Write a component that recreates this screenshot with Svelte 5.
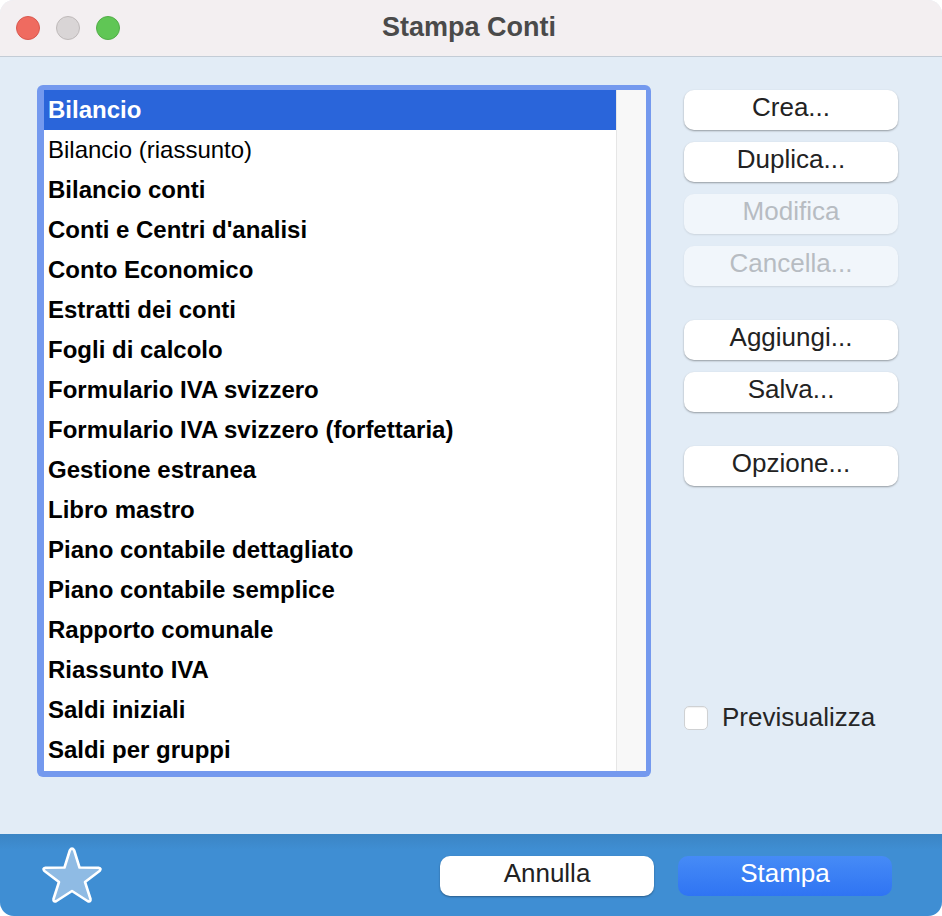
<script>
  const rows = [
    ['Bilancio', true, true],
    ['Bilancio (riassunto)', false],
    ['Bilancio conti', true],
    ["Conti e Centri d'analisi", true],
    ['Conto Economico', true],
    ['Estratti dei conti', true],
    ['Fogli di calcolo', true],
    ['Formulario IVA svizzero', true],
    ['Formulario IVA svizzero (forfettaria)', true],
    ['Gestione estranea', true],
    ['Libro mastro', true],
    ['Piano contabile dettagliato', true],
    ['Piano contabile semplice', true],
    ['Rapporto comunale', true],
    ['Riassunto IVA', true],
    ['Saldi iniziali', true],
    ['Saldi per gruppi', true]
  ];
  const groups = [
    [['Crea...', false], ['Duplica...', false], ['Modifica', true], ['Cancella...', true]],
    [['Aggiungi...', false], ['Salva...', false]],
    [['Opzione...', false]]
  ];
</script>

<div class="window">
  <header class="titlebar">
    <div class="lights">
      <span class="light red"></span>
      <span class="light gray"></span>
      <span class="light green"></span>
    </div>
    <h1>Stampa Conti</h1>
  </header>

  <main class="content">
    <div class="list">
      <div class="rows">
        {#each rows as [label, bold, selected]}
          <div class="row" class:bold class:selected>{label}</div>
        {/each}
      </div>
      <div class="track"></div>
    </div>

    <aside class="side">
      <div class="groups">
        {#each groups as group}
          <div class="group">
            {#each group as [label, disabled]}
              <button class="btn" {disabled}>{label}</button>
            {/each}
          </div>
        {/each}
      </div>
      <label class="check">
        <span class="box"></span>
        <span>Previsualizza</span>
      </label>
    </aside>
  </main>

  <footer class="footer">
    <svg class="star" width="62" height="62" viewBox="0 0 62 62">
      <path d="M28.8 4.5 Q31 0.8 33.2 4.5 L38.5 21.5 L57.5 21.8 Q61 22.5 58.5 25 L44 36 L49.5 53 Q50 56.5 46.5 55 L31 45 L15.5 55 Q12 56.5 12.5 53 L18 36 L3.5 25 Q1 22.5 4.5 21.8 L23.5 21.5 Z" fill="#8fbbe4" stroke="#fff" stroke-width="2.6" stroke-linejoin="round"/>
    </svg>
    <div class="actions">
      <button class="btn">Annulla</button>
      <button class="btn primary">Stampa</button>
    </div>
  </footer>
</div>

<style>
  :global(body) {
    margin: 0;
    background: #fff;
  }
  .window {
    width: 942px;
    height: 916px;
    display: flex;
    flex-direction: column;
    border-radius: 14px;
    overflow: hidden;
    font-family: "Liberation Sans", Arial, sans-serif;
    background: #e2ecf6;
  }
  .titlebar {
    flex: none;
    position: relative;
    display: flex;
    align-items: center;
    justify-content: center;
    padding: 0 4px 2px 0;
    height: 54px;
    background: #f3eff1;
    border-bottom: 1px solid #c3ccd6;
  }
  .titlebar h1 {
    margin: 0;
    font-size: 27px;
    font-weight: 700;
    color: #4a4a4a;
  }
  .lights {
    position: absolute;
    left: 16px;
    top: 16px;
    display: flex;
    gap: 16px;
  }
  .light {
    width: 24px;
    height: 24px;
    box-sizing: border-box;
    border-radius: 50%;
    border: 1px solid;
  }
  .red { background: #ef6b60; border-color: #d9584f; }
  .gray { background: #d9d5d6; border-color: #bfbaba; }
  .green { background: #60c655; border-color: #52ad48; }
  .content {
    flex: 1;
    display: flex;
    padding: 28px 44px 57px 37px;
    gap: 33px;
    min-height: 0;
  }
  .list {
    width: 614px;
    height: 692px;
    box-sizing: border-box;
    flex: none;
    display: flex;
    padding: 5px 5px 6px 7px;
    background: #7499ee;
    border-radius: 6px;
  }
  .rows {
    flex: 1;
    background: #fff;
    border-right: 1px solid #e6e6e6;
    overflow: hidden;
  }
  .track {
    width: 29px;
    flex: none;
    background: #f8f8f8;
  }
  .row {
    height: 40px;
    line-height: 40px;
    padding-left: 4px;
    font-size: 24px;
    color: #000;
    white-space: nowrap;
  }
  .row.bold { font-weight: 700; }
  .row.selected {
    background: #2a65da;
    color: #fff;
  }
  .side {
    flex: 1;
    display: flex;
    flex-direction: column;
    justify-content: space-between;
    padding-top: 5px;
  }
  .groups {
    display: flex;
    flex-direction: column;
    gap: 34px;
  }
  .group {
    display: flex;
    flex-direction: column;
    gap: 12px;
  }
  .btn {
    width: 214px;
    height: 40px;
    padding: 0 0 6px;
    border: 0;
    border-radius: 10px;
    background: #fff;
    color: #222;
    font-family: inherit;
    font-size: 26px;
    box-shadow: 0 1px 2px rgba(0, 0, 0, 0.35);
  }
  .btn:disabled {
    background: #f1f6fb;
    color: #b7bcc2;
    box-shadow: 0 1px 2px rgba(0, 0, 0, 0.1);
  }
  .check {
    display: flex;
    align-items: center;
    gap: 14px;
    margin-bottom: 44px;
    font-size: 26px;
    color: #262626;
  }
  .box {
    width: 24px;
    height: 24px;
    box-sizing: border-box;
    background: #fff;
    border: 1px solid #cfd1d3;
    border-radius: 5px;
    box-shadow: inset 0 1px 1px rgba(0, 0, 0, 0.06);
  }
  .footer {
    height: 82px;
    flex: none;
    position: relative;
    display: flex;
    align-items: flex-start;
    background: linear-gradient(#3b85c4, #3f8ed3 16px);
  }
  .star {
    position: absolute;
    left: 41px;
    top: 12px;
  }
  .actions {
    margin: 22px 50px 0 auto;
    display: flex;
    gap: 24px;
  }
  .btn.primary {
    background: linear-gradient(#468bf6, #2f74f3);
    color: #fff;
    box-shadow: none;
  }
</style>
